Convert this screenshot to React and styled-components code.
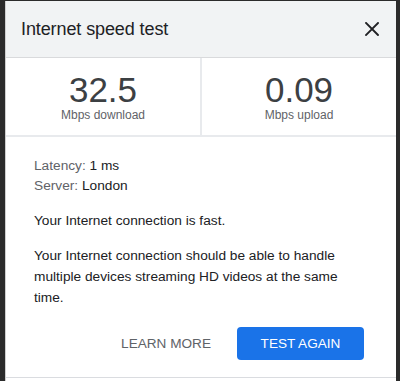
import React from 'react';
import styled, { createGlobalStyle } from 'styled-components';

const GlobalStyle = createGlobalStyle`
  html, body {
    margin: 0;
    padding: 0;
    background: #2b2b2b;
  }
  body {
    font-family: "Liberation Sans", Arial, sans-serif;
    -webkit-font-smoothing: antialiased;
  }
`;

const Screen = styled.div`
  display: flex;
  width: 400px;
  height: 381px;
  overflow: hidden;
  background: #2b2b2b;
`;

const PageEdge = styled.div`
  width: ${props => props.width}px;
  flex-shrink: 0;
  background: #2b2b2b;
`;

const Dialog = styled.div`
  width: 391px;
  flex-shrink: 0;
  margin-top: 1px;
  background: #fff;
  border-left: 1px solid #cfcfcf;
  box-sizing: border-box;
  display: flex;
  flex-direction: column;
`;

const Header = styled.div`
  height: 56px;
  flex-shrink: 0;
  display: flex;
  align-items: center;
  justify-content: space-between;
  padding: 0 12px 0 15px;
  background: #f1f3f4;
  border-bottom: 1px solid #d9dadc;
`;

const Title = styled.h1`
  margin: 0;
  font-size: 18px;
  font-weight: 400;
  color: #202124;
  letter-spacing: -0.1px;
`;

const CloseButton = styled.button`
  width: 24px;
  height: 24px;
  padding: 0;
  border: 0;
  background: none;
  display: flex;
  align-items: center;
  justify-content: center;
  margin-top: -1px;
`;

const Stats = styled.div`
  display: flex;
  height: 77px;
  flex-shrink: 0;
  border-bottom: 2px solid #e8eaed;
`;

const Stat = styled.div`
  flex: 1;
  display: flex;
  flex-direction: column;
  align-items: center;
  padding-top: 14px;
  & + & {
    border-left: 2px solid #e8eaed;
  }
`;

const StatValue = styled.div`
  font-size: 35px;
  line-height: 36px;
  color: #3c4043;
`;

const StatLabel = styled.div`
  margin-top: 1px;
  font-size: 12px;
  line-height: 12px;
  color: #5f6368;
`;

const Body = styled.div`
  padding: 19px 32px 0 28px;
  display: flex;
  flex-direction: column;
`;

const Meta = styled.div`
  font-size: 13.7px;
  line-height: 20px;
  color: #202124;
`;

const MetaKey = styled.span`
  color: #5f6368;
`;

const Paragraph = styled.p`
  margin: 14px 0 0;
  font-size: 13.7px;
  line-height: 21px;
  color: #202124;
`;

const Actions = styled.div`
  display: flex;
  justify-content: flex-end;
  align-items: center;
  gap: 26px;
  margin-top: 19px;
`;

const Button = styled.button`
  font-family: "Liberation Sans", Arial, sans-serif;
  font-size: 13.6px;
  text-transform: uppercase;
  border: 0;
  border-radius: 4px;
  height: 33px;
  padding: 0 ${props => (props.primary ? 23 : 0)}px;
  width: ${props => (props.primary ? '127px' : 'auto')};
  background: ${props => (props.primary ? '#1a73e8' : 'transparent')};
  color: ${props => (props.primary ? '#ffffff' : '#5f6368')};
  cursor: pointer;
`;

const Footer = styled.div`
  margin-top: auto;
  height: 3px;
  border-top: 1px solid #dadce0;
`;

const CloseIcon = () => (
  <svg width="14" height="14" viewBox="0 0 14 14">
    <path
      d="M1 1L13 13M13 1L1 13"
      stroke="#202124"
      strokeWidth="1.9"
      strokeLinecap="square"
      fill="none"
    />
  </svg>
);

const stats = [
  { value: '32.5', label: 'Mbps download' },
  { value: '0.09', label: 'Mbps upload' }
];

const App = () => (
  <>
    <GlobalStyle />
    <Screen>
      <PageEdge width={5} />
      <Dialog>
        <Header>
          <Title>Internet speed test</Title>
          <CloseButton aria-label="Close">
            <CloseIcon />
          </CloseButton>
        </Header>
        <Stats>
          {stats.map(stat => (
            <Stat key={stat.label}>
              <StatValue>{stat.value}</StatValue>
              <StatLabel>{stat.label}</StatLabel>
            </Stat>
          ))}
        </Stats>
        <Body>
          <Meta>
            <MetaKey>Latency:</MetaKey> 1 ms
          </Meta>
          <Meta>
            <MetaKey>Server:</MetaKey> London
          </Meta>
          <Paragraph>Your Internet connection is fast.</Paragraph>
          <Paragraph>
            Your Internet connection should be able to handle multiple
            devices streaming HD videos at the same time.
          </Paragraph>
          <Actions>
            <Button>Learn more</Button>
            <Button primary>Test again</Button>
          </Actions>
        </Body>
        <Footer />
      </Dialog>
      <PageEdge width={4} />
    </Screen>
  </>
);

export default App;
